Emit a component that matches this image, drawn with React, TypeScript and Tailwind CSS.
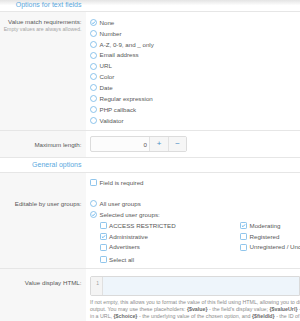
import React from 'react';

const FONT = { fontFamily: '"Liberation Sans", Arial, sans-serif' };

function Radio({ checked }: { checked?: boolean }) {
  return (
    <svg width="7" height="7" viewBox="0 0 14 14" className="shrink-0">
      <circle cx="7" cy="7" r="6" fill="white" stroke="#72b6e6" strokeWidth="1.6" />
      {checked && <path d="M4 7.3l2.1 2.1 4-4.3" fill="none" stroke="#47a7eb" strokeWidth="1.7" />}
    </svg>
  );
}

function Check({ checked }: { checked?: boolean }) {
  return (
    <svg width="7" height="7" viewBox="0 0 14 14" className="shrink-0">
      <rect x="1" y="1" width="12" height="12" rx="1.5" fill="white" stroke="#72b6e6" strokeWidth="1.6" />
      {checked && <path d="M3.8 7.2l2.2 2.2 4.2-4.6" fill="none" stroke="#47a7eb" strokeWidth="1.7" />}
    </svg>
  );
}

function Option({ label, checked, box }: { label: string; checked?: boolean; box?: boolean }) {
  return (
    <div className="h-[10.9px] flex items-center gap-[2.5px] whitespace-nowrap">
      {box ? <Check checked={checked} /> : <Radio checked={checked} />}
      <span>{label}</span>
    </div>
  );
}

const matchOptions = [
  'None',
  'Number',
  'A-Z, 0-9, and _ only',
  'Email address',
  'URL',
  'Color',
  'Date',
  'Regular expression',
  'PHP callback',
  'Validator',
];

export default function App() {
  return (
    <div className="w-[300px] h-[321px] overflow-hidden bg-white text-[#585858] text-[6.2px]" style={FONT}>
      {/* section header */}
      <div className="h-[12px] flex border-b border-[#e6e6e6] bg-gradient-to-b from-[#e4e4e4] via-white to-white">
        <div className="w-[86px] text-right pr-[4.5px] text-[7px] leading-[9px] text-[#5aa9de]">Options for text fields</div>
      </div>

      {/* Value match requirements */}
      <div className="flex border-b border-[#e6e6e6]">
        <div className="w-[86px] shrink-0 bg-[#f7f7f7] text-right pr-[4.5px] pt-[5px]">
          <div className="leading-[10.9px] whitespace-nowrap">Value match requirements:</div>
          <div className="-mt-[1.5px] leading-[6px] text-[5.2px] text-[#a5a5a5] whitespace-nowrap">Empty values are always allowed.</div>
        </div>
        <div className="flex-1 pl-[4px] pt-[5px] pb-[4.5px]">
          {matchOptions.map((o, i) => (
            <Option key={o} label={o} checked={i === 0} />
          ))}
        </div>
      </div>

      {/* Maximum length */}
      <div className="flex border-b border-[#e6e6e6] h-[27px]">
        <div className="w-[86px] shrink-0 bg-[#f7f7f7] text-right pr-[4.5px] flex items-center justify-end">
          Maximum length:
        </div>
        <div className="flex-1 pl-[4px] flex items-center">
          <div className="w-[97px] h-[16px] flex border border-[#dcdcdc] rounded-[2px] bg-[#fcfcfc]">
            <div className="flex-1 text-right pr-[2px] flex items-center justify-end">0</div>
            <div className="w-[19px] border-l border-[#e2e2e2] bg-[#f6f6f6] flex items-center justify-center text-[#4a8fc4] text-[8px]">+</div>
            <div className="w-[18px] border-l border-[#e2e2e2] bg-[#f6f6f6] flex items-center justify-center text-[#4a8fc4] text-[8px]">−</div>
          </div>
        </div>
      </div>

      {/* General options header */}
      <div className="h-[15px] flex border-b border-[#e6e6e6] bg-white">
        <div className="w-[86px] text-right pr-[4.5px] text-[7px] text-[#5aa9de] flex items-center justify-end whitespace-nowrap">General options</div>
      </div>

      {/* Field required + editable by */}
      <div className="flex border-b border-[#e6e6e6]">
        <div className="w-[86px] shrink-0 bg-[#f7f7f7] text-right pr-[4.5px] pt-[24.8px]">
          <div className="leading-[11px] whitespace-nowrap">Editable by user groups:</div>
        </div>
        <div className="flex-1 pl-[4px] pt-[3.5px] pb-[2.8px]">
          <Option label="Field is required" box />
          <div className="mt-[10.3px]">
            <Option label="All user groups" />
            <Option label="Selected user groups:" checked />
            <div className="pl-[9.5px]">
              <div className="grid grid-cols-[140.5px_1fr]">
                <div>
                  <Option label="ACCESS RESTRICTED" box />
                  <Option label="Administrative" box checked />
                  <Option label="Advertisers" box />
                </div>
                <div>
                  <Option label="Moderating" box checked />
                  <Option label="Registered" box />
                  <Option label="Unregistered / Unconfirmed" box />
                </div>
              </div>
              <div className="mt-[1.4px]">
                <Option label="Select all" box />
              </div>
            </div>
          </div>
        </div>
      </div>

      {/* Value display HTML */}
      <div className="flex">
        <div className="w-[86px] shrink-0 bg-[#f7f7f7] text-right pr-[4.5px] pt-[9.5px] h-[60px]">
          <div className="leading-[10px] whitespace-nowrap">Value display HTML:</div>
        </div>
        <div className="flex-1 pl-[4px] pt-[7px] min-w-0 overflow-hidden">
          <div className="h-[20px] flex border border-[#dadada] rounded-l-[2px]">
            <div className="w-[12px] bg-[#f4f4f4] border-r border-[#e0e0e0] text-[5px] text-[#a0a0a0] text-right pr-[3px] pt-[3px]">1</div>
            <div className="flex-1 bg-[#eef5fb]"></div>
          </div>
          <div className="mt-[3px] text-[5.3px] leading-[7.2px] text-[#8c8c8c] whitespace-nowrap">
            <div>If not empty, this allows you to format the value of this field using HTML, allowing you to display it</div>
            <div>
              output. You may use these placeholders: <b className="text-[#6a6a6a]">{'{$value}'}</b> - the field's display value; <b className="text-[#6a6a6a]">{'{$valueUrl}'}</b> - the value
            </div>
            <div>
              in a URL, <b className="text-[#6a6a6a]">{'{$choice}'}</b> - the underlying value of the chosen option, and <b className="text-[#6a6a6a]">{'{$fieldId}'}</b> - the ID of this field
            </div>
          </div>
        </div>
      </div>
    </div>
  );
}
